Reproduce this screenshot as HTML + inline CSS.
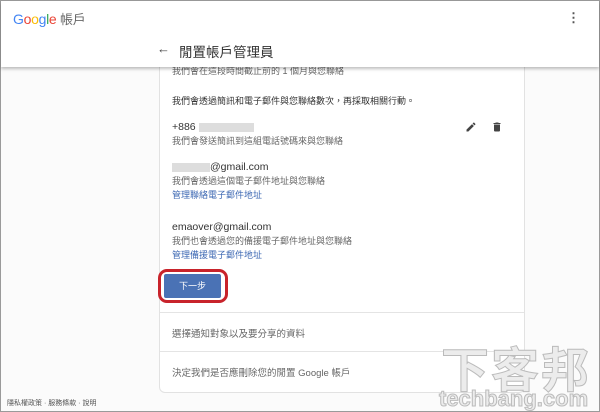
<!DOCTYPE html>
<html><head><meta charset="utf-8"><style>
*{margin:0;padding:0;box-sizing:border-box}
body{width:600px;height:412px;overflow:hidden;background:#fbfbfb;font-family:"Liberation Sans","Noto Sans CJK TC",sans-serif;position:relative;border:1px solid #9a9a9a}
.hdr{position:absolute;left:0;top:0;width:598px;height:66px;background:#fff;box-shadow:0 2px 3px rgba(0,0,0,.25);z-index:2}
.card{position:absolute;left:158px;top:40px;width:366px;height:352px;background:#fff;border:1px solid #e2e2e2;border-radius:6px}
.t{position:absolute;white-space:nowrap}
.s{font-size:9px;color:#666}
.m{font-size:10.5px;color:#333}
.l{font-size:9px;color:#3d68b3}
.blur{display:inline-block;background:#ddd;height:9px;vertical-align:middle}
</style></head><body>
<div class="card">
<div class="t s" style="left:12px;top:22px;color:#666">我們會在這段時間截止前的 1 個月與您聯絡</div>
<div class="t s" style="left:12px;top:52px;color:#333">我們會透過簡訊和電子郵件與您聯絡數次，再採取相關行動。</div>
<div class="t m" style="left:12px;top:79px">+886 <span class="blur" style="width:55px"></span></div>
<div class="t s" style="left:12px;top:92px">我們會發送簡訊到這組電話號碼來與您聯絡</div>
<div class="t m" style="left:12px;top:119px"><span class="blur" style="width:38px"></span>@gmail.com</div>
<div class="t s" style="left:12px;top:132px">我們會透過這個電子郵件地址與您聯絡</div>
<div class="t l" style="left:12px;top:146px">管理聯絡電子郵件地址</div>
<div class="t m" style="left:12px;top:179px">emaover@gmail.com</div>
<div class="t s" style="left:12px;top:192px">我們也會透過您的備援電子郵件地址與您聯絡</div>
<div class="t l" style="left:12px;top:206px">管理備援電子郵件地址</div>
<div style="position:absolute;left:-2px;top:227px;width:70px;height:34px;border:3px solid #c8232b;border-radius:9px"></div>
<div style="position:absolute;left:4px;top:232px;width:57px;height:24px;background:#4a72b5;border-radius:2px;color:#fff;font-size:9px;text-align:center;line-height:24px">下一步</div>
<div style="position:absolute;left:0;right:0;top:270px;border-top:1px solid #e4e4e4"></div>
<div class="t" style="left:12px;top:284px;font-size:9.5px;color:#666">選擇通知對象以及要分享的資料</div>
<div style="position:absolute;left:0;right:0;top:309px;border-top:1px solid #e4e4e4"></div>
<div class="t" style="left:12px;top:323px;font-size:9.5px;color:#666">決定我們是否應刪除您的閒置 Google 帳戶</div>
<svg style="position:absolute;left:305px;top:79px" width="12" height="12" viewBox="0 0 24 24"><path fill="#444" d="M3 17.25V21h3.75L17.8 9.94l-3.75-3.75L3 17.25zM20.7 7.04a1 1 0 000-1.41l-2.34-2.34a1 1 0 00-1.41 0l-1.83 1.83 3.75 3.75 1.83-1.83z"/></svg>
<svg style="position:absolute;left:331px;top:79px" width="12" height="12" viewBox="0 0 24 24"><path fill="#444" d="M6 19c0 1.1.9 2 2 2h8c1.1 0 2-.9 2-2V7H6v12zM19 4h-3.5l-1-1h-5l-1 1H5v2h14V4z"/></svg>
</div>
<div class="hdr">
<div class="t" style="left:12px;top:8px;font-size:14px;letter-spacing:-.3px"><span style="color:#4285f4">G</span><span style="color:#ea4335">o</span><span style="color:#fbbc05">o</span><span style="color:#4285f4">g</span><span style="color:#34a853">l</span><span style="color:#ea4335">e</span> <span style="color:#666;font-size:13px">帳戶</span></div>
<div class="t" style="left:566px;top:9px;font-size:13px;color:#555;font-weight:bold">⋮</div>
<div class="t" style="left:156px;top:40px;font-size:13px;color:#444">←</div>
<div class="t" style="left:178px;top:40px;font-size:13.5px;color:#333">閒置帳戶管理員</div>
</div>
<div class="t" style="left:6px;top:397px;font-size:7px;color:#555">隱私權政策 · 服務條款 · 說明</div>
<div class="t" style="left:440px;top:330px;font-size:48px;color:#ececec;font-weight:bold;letter-spacing:2px;-webkit-text-stroke:1px #bbb">下客邦</div>
<div class="t" style="left:438px;top:385px;font-size:22px;color:#ececec;font-weight:bold;-webkit-text-stroke:1px #bbb">techbang.com</div>
</body></html>
